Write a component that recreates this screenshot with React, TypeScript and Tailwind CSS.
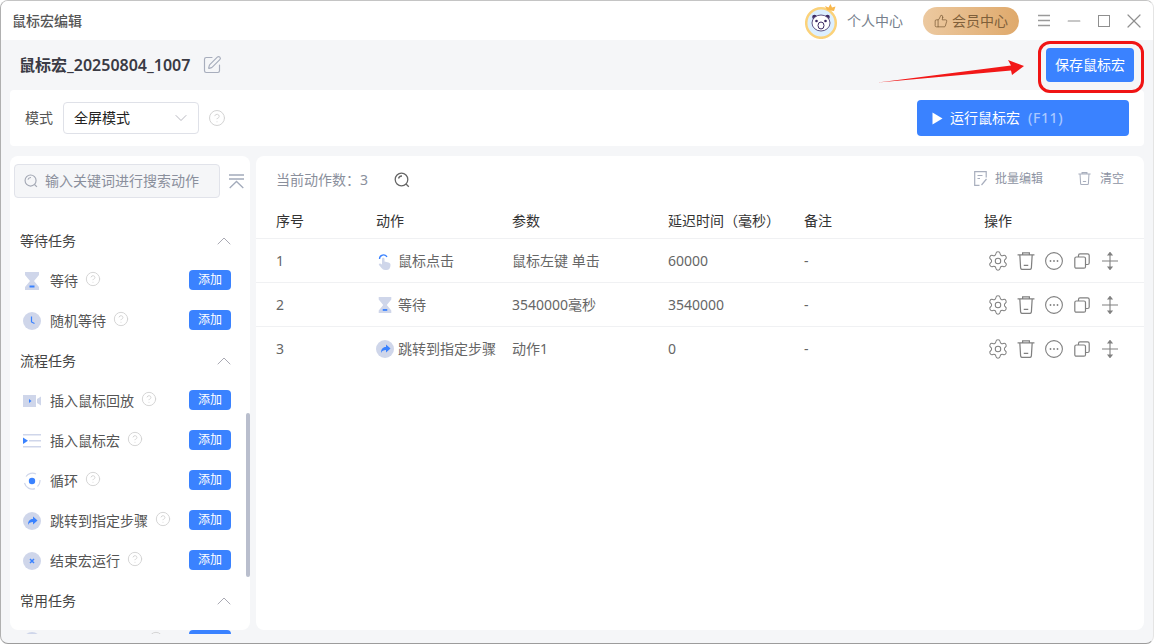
import { ChevronDown, ChevronUp, CircleHelp, Minus, Settings, SquarePen, ThumbsUp, X } from 'lucide-react';
import type { ReactNode } from 'react';

const pale = '#cfd6ea';
const blue = '#3a82ff';

function Hourglass() {
  return (
    <svg width="20" height="20" viewBox="0 0 20 20">
      <path d="M3 1h14v3l-5 6 5 6v3H3v-3l5-6-5-6z" fill={pale} />
      <rect x="7.500" y="14.500" width="5" height="2" fill={blue} />
    </svg>
  );
}

function ClockIcon() {
  return (
    <svg width="18" height="18" viewBox="0 0 18 18">
      <circle cx="9" cy="9" r="9" fill={pale} />
      <path d="M8.500 4.500v5.500l3 1.500" fill="none" stroke={blue} strokeWidth="1.200" />
    </svg>
  );
}

function ReplayIcon() {
  return (
    <svg width="18" height="14" viewBox="0 0 18 14">
      <rect x="0" y="1" width="13" height="12" fill={pale} />
      <path d="M14 5l4-2.500v9L14 9z" fill={pale} />
      <path d="M6 5l2.500 2L6 9z" fill={blue} />
    </svg>
  );
}

function MacroIcon() {
  return (
    <svg width="18" height="14" viewBox="0 0 18 14">
      <rect x="0" y="0" width="18" height="1.500" fill={pale} />
      <rect x="6" y="6" width="12" height="1.500" fill={pale} />
      <rect x="0" y="12" width="18" height="1.500" fill={pale} />
      <path d="M0 3.500l5 3.200-5 3.200z" fill={blue} />
    </svg>
  );
}

function LoopIcon() {
  return (
    <svg width="18" height="18" viewBox="0 0 18 18">
      <circle cx="9" cy="9" r="3.200" fill={blue} />
      <path d="M3 4.500A8 8 0 0 1 13 2M17 8a8 8 0 0 1-2.500 6.500M12 16.600A8 8 0 0 1 1.500 11" fill="none" stroke={pale} strokeWidth="1.200" />
    </svg>
  );
}

function JumpIcon() {
  return (
    <svg width="18" height="18" viewBox="0 0 18 18">
      <circle cx="9" cy="9" r="9" fill={pale} />
      <path d="M10 4.500l4.500 4-4.500 4V10c-2.500 0-4 .8-5 3 0-3.500 1.500-6 5-6z" fill={blue} />
    </svg>
  );
}

function StopIcon() {
  return (
    <svg width="18" height="18" viewBox="0 0 18 18">
      <circle cx="9" cy="9" r="9" fill={pale} />
      <path d="M7 7l4 4M11 7l-4 4" stroke={blue} strokeWidth="1.500" />
    </svg>
  );
}

function ClickIcon() {
  return (
    <svg width="18" height="18" viewBox="0 0 18 18">
      <path d="M3.500 7A4 4 0 0 1 11 5" fill="none" stroke={blue} strokeWidth="1.300" />
      <path d="M6 7c0-1.600 2.500-1.600 2.500 0v2.500l4 1c1.500.4 2 1.200 2 2.500 0 3-1.500 5-4 5H9c-1.500 0-2.500-.8-3.500-2L3 13c-.6-1 .6-2 1.600-1.300L6 12.500z" fill={pale} />
    </svg>
  );
}

function TrashIcon({ color = '#808080', size = 18, weight = 1.100 }: { color?: string; size?: number; weight?: number }) {
  return (
    <svg width={size} height={size} viewBox="0 0 16 16" fill="none" stroke={color} strokeWidth={weight}>
      <path d="M0.500 2.500h15M5 2.500V0.800h6v1.700M2.500 2.500l.7 11.500c0 .9.600 1.500 1.500 1.500h6.600c.9 0 1.500-.6 1.500-1.500l.7-11.500M6 11.800h4" />
    </svg>
  );
}

function MoreIcon() {
  return (
    <svg width="18" height="18" viewBox="0 0 18 18" fill="none" stroke="#808080" strokeWidth="1.100">
      <circle cx="9" cy="9" r="8.400" />
      <g fill="#808080" stroke="none">
        <circle cx="5.500" cy="9" r="0.900" />
        <circle cx="9" cy="9" r="0.900" />
        <circle cx="12.500" cy="9" r="0.900" />
      </g>
    </svg>
  );
}

function CopyIcon() {
  return (
    <svg width="16" height="16" viewBox="0 0 16 16" fill="none" stroke="#808080" strokeWidth="1.200">
      <rect x="0.800" y="4" width="10.700" height="11.200" rx="1.500" />
      <path d="M4.500 4V2.500C4.500 1.700 5 .8 6 .8h7.500c1 0 1.700.9 1.700 1.700V10c0 1-.7 1.500-1.700 1.500h-2" />
    </svg>
  );
}

function MoveIcon() {
  return (
    <svg width="16" height="18" viewBox="0 0 16 18" fill="none" stroke="#808080" strokeWidth="1.100">
      <path d="M0 9h16M8 1v16" />
      <path d="M6 3l2-2.500L10 3zM6 15l2 2.500L10 15z" fill="#808080" />
    </svg>
  );
}

function BatchEditIcon() {
  return (
    <svg width="13" height="15" viewBox="0 0 13 15" fill="none" stroke="#a8aebd" strokeWidth="1.200">
      <path d="M5.500 14.400H.7V.6h11.500v6M3.500 4.500h5M3.500 7.500h2.500M12.500 8l-5 6" />
    </svg>
  );
}

function CollapseIcon() {
  return (
    <svg width="15" height="15" viewBox="0 0 15 15" fill="none" stroke="#a3abbb" strokeWidth="1.300">
      <path d="M0 1h15M0 5h15M.7 14l6.800-6.500 6.800 6.500" />
    </svg>
  );
}

function SearchGlass({ color = '#666', size = 16 }: { color?: string; size?: number }) {
  return (
    <svg width={size} height={size} viewBox="0 0 16 16" fill="none" stroke={color} strokeWidth="1.300">
      <circle cx="7.500" cy="7.500" r="6.300" />
      <path d="M12 12l2.800 2.800M4.500 6.500A3.500 3.500 0 0 1 8 4" />
    </svg>
  );
}

function Avatar() {
  return (
    <svg width="34" height="36" viewBox="0 0 34 36">
      <circle cx="16" cy="20" r="14.800" fill="#dcefff" stroke="#fbd27a" strokeWidth="2.500" />
      <path d="M22 7l-2-4 3.500 1.500L25.500 1l1.500 3.500 3.500-1L29 8z" fill="#f8b84e" />
      <circle cx="9.500" cy="14" r="2.300" fill="#3b2a63" />
      <circle cx="22.500" cy="14" r="2.300" fill="#3b2a63" />
      <ellipse cx="16" cy="20" rx="9" ry="8" fill="#fff" stroke="#3b2a63" strokeWidth="0.800" />
      <circle cx="11.500" cy="18" r="1.300" fill="#3b2a63" />
      <circle cx="20.500" cy="18" r="1.300" fill="#3b2a63" />
      <ellipse cx="16" cy="22.500" rx="3" ry="3.500" fill="#fff" stroke="#3b2a63" strokeWidth="1" />
    </svg>
  );
}

function Help() {
  return <CircleHelp className="ml-[7px] h-4 w-4 -translate-y-[2px] text-[#d2d2d2]" strokeWidth={1.400} />;
}

function GroupHead({ title }: { title: string }) {
  return (
    <div className="flex h-10 items-center justify-between pl-[10px] pr-[14px] text-sm text-[#444]">
      <span>{title}</span>
      <ChevronUp className="h-6 w-6 text-[#a9a9b3]" strokeWidth={1} />
    </div>
  );
}

function TaskRow({ icon, label }: { icon?: ReactNode; label?: string }) {
  return (
    <div className="flex h-10 items-center pr-[19px] text-sm text-[#555]">
      <span className="flex w-[40px] shrink-0 justify-center pl-[4px]">{icon}</span>
      {label ? <span>{label}</span> : <span className="w-[91px]" />}
      <Help />
      <button className="ml-auto h-5 w-[42px] -translate-y-px rounded-[4px] bg-[#3a82ff] text-xs text-white">{label ? '添加' : null}</button>
    </div>
  );
}

function RowActions() {
  return (
    <div className="flex items-center">
      <Settings className="h-[22px] w-[22px] text-[#808080]" strokeWidth={1.100} />
      <span className="ml-[8px]"><TrashIcon /></span>
      <span className="ml-[10px]"><MoreIcon /></span>
      <span className="ml-[11px]"><CopyIcon /></span>
      <span className="ml-[12px]"><MoveIcon /></span>
    </div>
  );
}

const rows = [
  { no: '1', icon: <ClickIcon />, action: '鼠标点击', param: '鼠标左键 单击', delay: '60000' },
  { no: '2', icon: <Hourglass />, action: '等待', param: '3540000毫秒', delay: '3540000' },
  { no: '3', icon: <JumpIcon />, action: '跳转到指定步骤', param: '动作1', delay: '0' },
];

export default function App() {
  return (
    <div
      className="relative flex h-[644px] w-[1154px] flex-col overflow-hidden rounded-[8px] border-t border-r border-b border-l border-t-[#c4c4c4] border-r-[#e4e4e4] border-b-[#9c9c9c] border-l-[#b0b0b0] bg-[#f5f6f8] text-sm"
      style={{ fontFamily: '"Noto Sans", "Noto Sans CJK SC", sans-serif' }}
    >
      {/* Title bar */}
      <div className="flex h-[39px] shrink-0 items-center bg-white pl-[11px] pr-[7px]">
        <span className="text-sm font-medium text-[#555]">鼠标宏编辑</span>
        <div className="ml-auto flex items-center">
          <Avatar />
          <span className="ml-[8px] text-sm text-[#777f8c]">个人中心</span>
          <div className="ml-[20px] flex h-7 w-[96px] items-center justify-center gap-[4px] rounded-full bg-gradient-to-r from-[#ecc9a0] to-[#dfa96b] text-sm text-[#7f5f3a]">
            <ThumbsUp className="h-[14px] w-[14px]" strokeWidth={1.300} />
            会员中心
          </div>
          <svg className="ml-[19px]" width="12" height="13" viewBox="0 0 12 13" stroke="#9a9a9a" strokeWidth="1.400">
            <path d="M0 1.500h12M0 6.500h12M0 11.500h12" />
          </svg>
          <Minus className="ml-[14px] h-5 w-5 text-[#8f8f8f]" strokeWidth={1.400} />
          <div className="ml-[14px] h-[12px] w-[12px] border-[1.500px] border-[#8f8f8f]" />
          <X className="ml-[12px] h-6 w-6 text-[#8f8f8f]" strokeWidth={1.200} />
        </div>
      </div>

      {/* Macro name */}
      <div className="flex h-[50px] shrink-0 items-center pl-[18px] pr-[19px]">
        <span className="text-base font-semibold text-[#3a3a44]">鼠标宏_20250804_1007</span>
        <SquarePen className="ml-[12px] h-5 w-5 text-[#a8aebd]" strokeWidth={1.400} />
        <button className="ml-auto h-[34px] w-[88px] rounded-[4px] bg-[#3a82ff] text-sm text-white">保存鼠标宏</button>
      </div>

      {/* Mode */}
      <div className="mx-[9px] flex h-[56px] shrink-0 items-center rounded-[4px] bg-white pl-[15px] pr-[15px]">
        <span className="text-[#555]">模式</span>
        <div className="ml-[10px] flex h-8 w-[136px] items-center justify-between rounded-[4px] border border-[#dfe1e8] pl-[10px] pr-[7px] text-[#222]">
          全屏模式
          <ChevronDown className="h-5 w-5 text-[#a9a9b3]" strokeWidth={1} />
        </div>
        <CircleHelp className="ml-[9px] h-[18px] w-[18px] text-[#d2d2d2]" strokeWidth={1.300} />
        <button className="ml-auto flex h-9 w-[212px] items-center rounded-[4px] bg-[#3a82ff] pl-[15px] text-sm text-white">
          <svg width="11" height="13" viewBox="0 0 11 13" fill="#fff">
            <path d="M.5.500l10 6-10 6z" />
          </svg>
          <span className="ml-[7px]">运行鼠标宏</span>
          <span className="ml-2 font-medium tracking-[0.6px] text-[#a9c8ff]">(F11)</span>
        </button>
      </div>

      {/* Body */}
      <div className="relative mt-[10px] flex min-h-0 flex-1 gap-[6px] px-[9px]">
        <div className="relative h-[478px] w-[240px] shrink-0 overflow-hidden">
          <div className="absolute inset-x-0 top-0 h-[474px] rounded-[8px] bg-white" />
          <div className="relative">
            <div className="flex items-center pl-[4px] pt-[8px]">
              <div className="flex h-[34px] w-[206px] items-center rounded-[4px] border border-[#e1e3ea] bg-[#f5f6f8] pl-[9px] text-sm text-[#8a8f9c]">
                <SearchGlass color="#a3a8b4" size={14} />
                <span className="ml-[7px]">输入关键词进行搜索动作</span>
              </div>
              <span className="ml-[9px]"><CollapseIcon /></span>
            </div>
            <div className="pt-[23px]">
              <GroupHead title="等待任务" />
              <TaskRow icon={<Hourglass />} label="等待" />
              <TaskRow icon={<ClockIcon />} label="随机等待" />
              <GroupHead title="流程任务" />
              <TaskRow icon={<ReplayIcon />} label="插入鼠标回放" />
              <TaskRow icon={<MacroIcon />} label="插入鼠标宏" />
              <TaskRow icon={<LoopIcon />} label="循环" />
              <TaskRow icon={<JumpIcon />} label="跳转到指定步骤" />
              <TaskRow icon={<StopIcon />} label="结束宏运行" />
              <GroupHead title="常用任务" />
              <TaskRow icon={<StopIcon />} />
            </div>
          </div>
          {/* Scrollbar */}
          <div className="absolute left-[236px] top-[257px] h-[164px] w-1 rounded-full bg-[#b9becd]" />
        </div>

        {/* Action table */}
        <div className="h-[474px] flex-1 rounded-[8px] bg-white">
          <div className="flex h-[47px] items-center pl-[20px] pr-[20px] text-[#8a8f9c]">
            <span>当前动作数：3</span>
            <span className="ml-[26px]"><SearchGlass /></span>
            <div className="ml-auto flex -translate-y-px items-center text-xs text-[#8e94a3]">
              <BatchEditIcon />
              <span className="ml-[8px]">批量编辑</span>
              <span className="ml-[35px]"><TrashIcon color="#a8aebd" size={13} weight={1.300} /></span>
              <span className="ml-[9px]">清空</span>
            </div>
          </div>
          <div className="grid h-[36px] grid-cols-[100px_136px_156px_136px_180px_1fr] items-center border-b border-[#f0f1f3] pl-[20px] text-sm text-[#333]">
            <span>序号</span>
            <span>动作</span>
            <span>参数</span>
            <span className="whitespace-nowrap">延迟时间（毫秒）</span>
            <span>备注</span>
            <span>操作</span>
          </div>
          {rows.map((r, i) => (
            <div
              key={r.no}
              className={
                i < rows.length - 1
                  ? 'grid h-[44px] grid-cols-[100px_136px_156px_136px_180px_1fr] items-center border-b border-[#f0f1f3] pl-[20px] text-sm text-[#666]'
                  : 'grid h-[44px] grid-cols-[100px_136px_156px_136px_180px_1fr] items-center pl-[20px] text-sm text-[#666]'
              }
            >
              <span>{r.no}</span>
              <span className="flex items-center whitespace-nowrap">
                <span className="flex w-[18px] justify-center">{r.icon}</span>
                <span className="ml-[4px]">{r.action}</span>
              </span>
              <span>{r.param}</span>
              <span>{r.delay}</span>
              <span>-</span>
              <span className="pl-[3px]"><RowActions /></span>
            </div>
          ))}
        </div>
      </div>

      {/* Annotation: red arrow and highlight */}
      <div className="absolute left-[1037px] top-[40px] h-[52px] w-[106px] rounded-[12px] border-[3px] border-[#f01414]" />
      <svg className="absolute left-[877px] top-[58px]" width="148" height="26" viewBox="0 0 148 26">
        <path d="M0 23.500L133 6.500 130 1l16 6-12 9-1-4.500z" fill="#f21818" />
      </svg>
    </div>
  );
}
